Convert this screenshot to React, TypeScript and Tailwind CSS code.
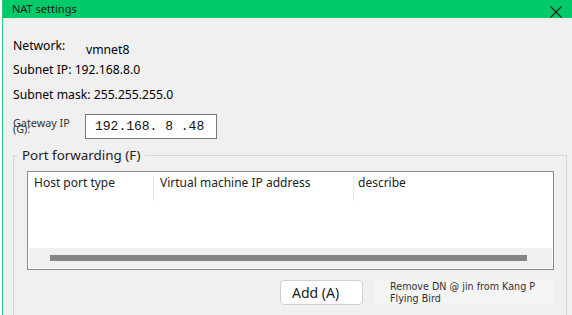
export default function App() {
  return (
    <div className="flex w-[572px] h-[315px] overflow-hidden bg-white font-['Noto_Sans',sans-serif] text-black">
      <div className="w-[2px] bg-white" />
      <div className="w-[1px] bg-[#34c77f]" />
      <div className="flex flex-1 flex-col bg-[#f0f0f0]">
        <div className="flex h-[30px] items-start justify-between bg-[#00cb69] pl-[9px] pr-[10px]">
          <span className="mt-[2px] text-[11px] leading-[14px] text-[#1a1a1a]">NAT settings</span>
          <svg width="12" height="12" viewBox="0 0 12 12" className="mt-[6px]">
            <path d="M0.5 0.5 L11.5 11.5 M11.5 0.5 L0.5 11.5" stroke="#1a1a1a" strokeWidth="1.1" />
          </svg>
        </div>

        <div className="flex flex-col pl-[10px] text-[12.2px]">
          <div className="mt-[20px] flex items-start">
            <span className="w-[73px] leading-[16px]">Network:</span>
            <span className="mt-[4px] leading-[16px]">vmnet8</span>
          </div>
          <div className="mt-[4px] leading-[16px]">Subnet IP: 192.168.8.0</div>
          <div className="mt-[9px] leading-[16px]">Subnet mask: 255.255.255.0</div>

          <div className="mt-[11px] flex items-center">
            <div className="relative h-[25px] w-[72px] text-[10.8px] leading-[11px] text-[#333]">
              <span className="absolute left-0 top-[3px]">Gateway IP</span>
              <span className="absolute left-0 top-[9px]">(G):</span>
            </div>
            <div className="flex h-[25px] w-[132px] items-center border border-[#7a7a7a] bg-white pl-[9px] font-['Liberation_Mono',monospace] text-[13px] leading-[16px] text-[#111]">
              <span className="whitespace-pre">192.168. 8 .48</span>
            </div>
          </div>

          <div className="relative mt-[16px] mr-[5px] h-[170px] border-l border-t border-r border-[#d6d6d6]">
            <span className="absolute left-[4px] top-[-10px] bg-[#f0f0f0] px-[4px] text-[13.4px] leading-[18px] text-[#222]">
              Port forwarding (F)
            </span>
            <div className="mt-[15px] ml-[13px] mr-[12px] flex h-[99px] flex-col border border-[#8a8a8a] bg-white">
              <div className="flex h-[26px] items-start text-[12px] text-[#222]">
                <span className="mt-[3px] w-[125px] pl-[6px] leading-[16px]">Host port type</span>
                <span className="mt-[3px] h-[26px] w-[200px] border-l border-[#e3e3e3] pl-[6px] leading-[16px]">
                  Virtual machine IP address
                </span>
                <span className="mt-[3px] h-[26px] flex-1 border-l border-[#e3e3e3] pl-[4px] leading-[16px]">describe</span>
              </div>
              <div className="flex-1" />
              <div className="mx-[1px] mb-[1px] flex h-[20px] items-center bg-[#f0f0f0] pl-[21px] pr-[25px]">
                <div className="h-[6px] flex-1 bg-[#858585]" />
              </div>
            </div>
            <div className="mt-[10px] flex pl-[266px]">
              <button className="h-[25px] w-[83px] rounded-[4px] border border-[#d0d0d0] bg-white pl-[11px] text-left text-[14px] text-[#222]">
                Add (A)
              </button>
              <div className="ml-[11px] flex h-[25px] w-[180px] flex-col rounded-[3px] bg-[#f4f4f4] pl-[16px] pt-[1px] font-['DejaVu_Sans',sans-serif] text-[9.6px] leading-[12px] text-[#333]">
                <span>Remove DN @ jin from Kang P</span>
                <span>Flying Bird</span>
              </div>
            </div>
          </div>
        </div>
      </div>
    </div>
  );
}
